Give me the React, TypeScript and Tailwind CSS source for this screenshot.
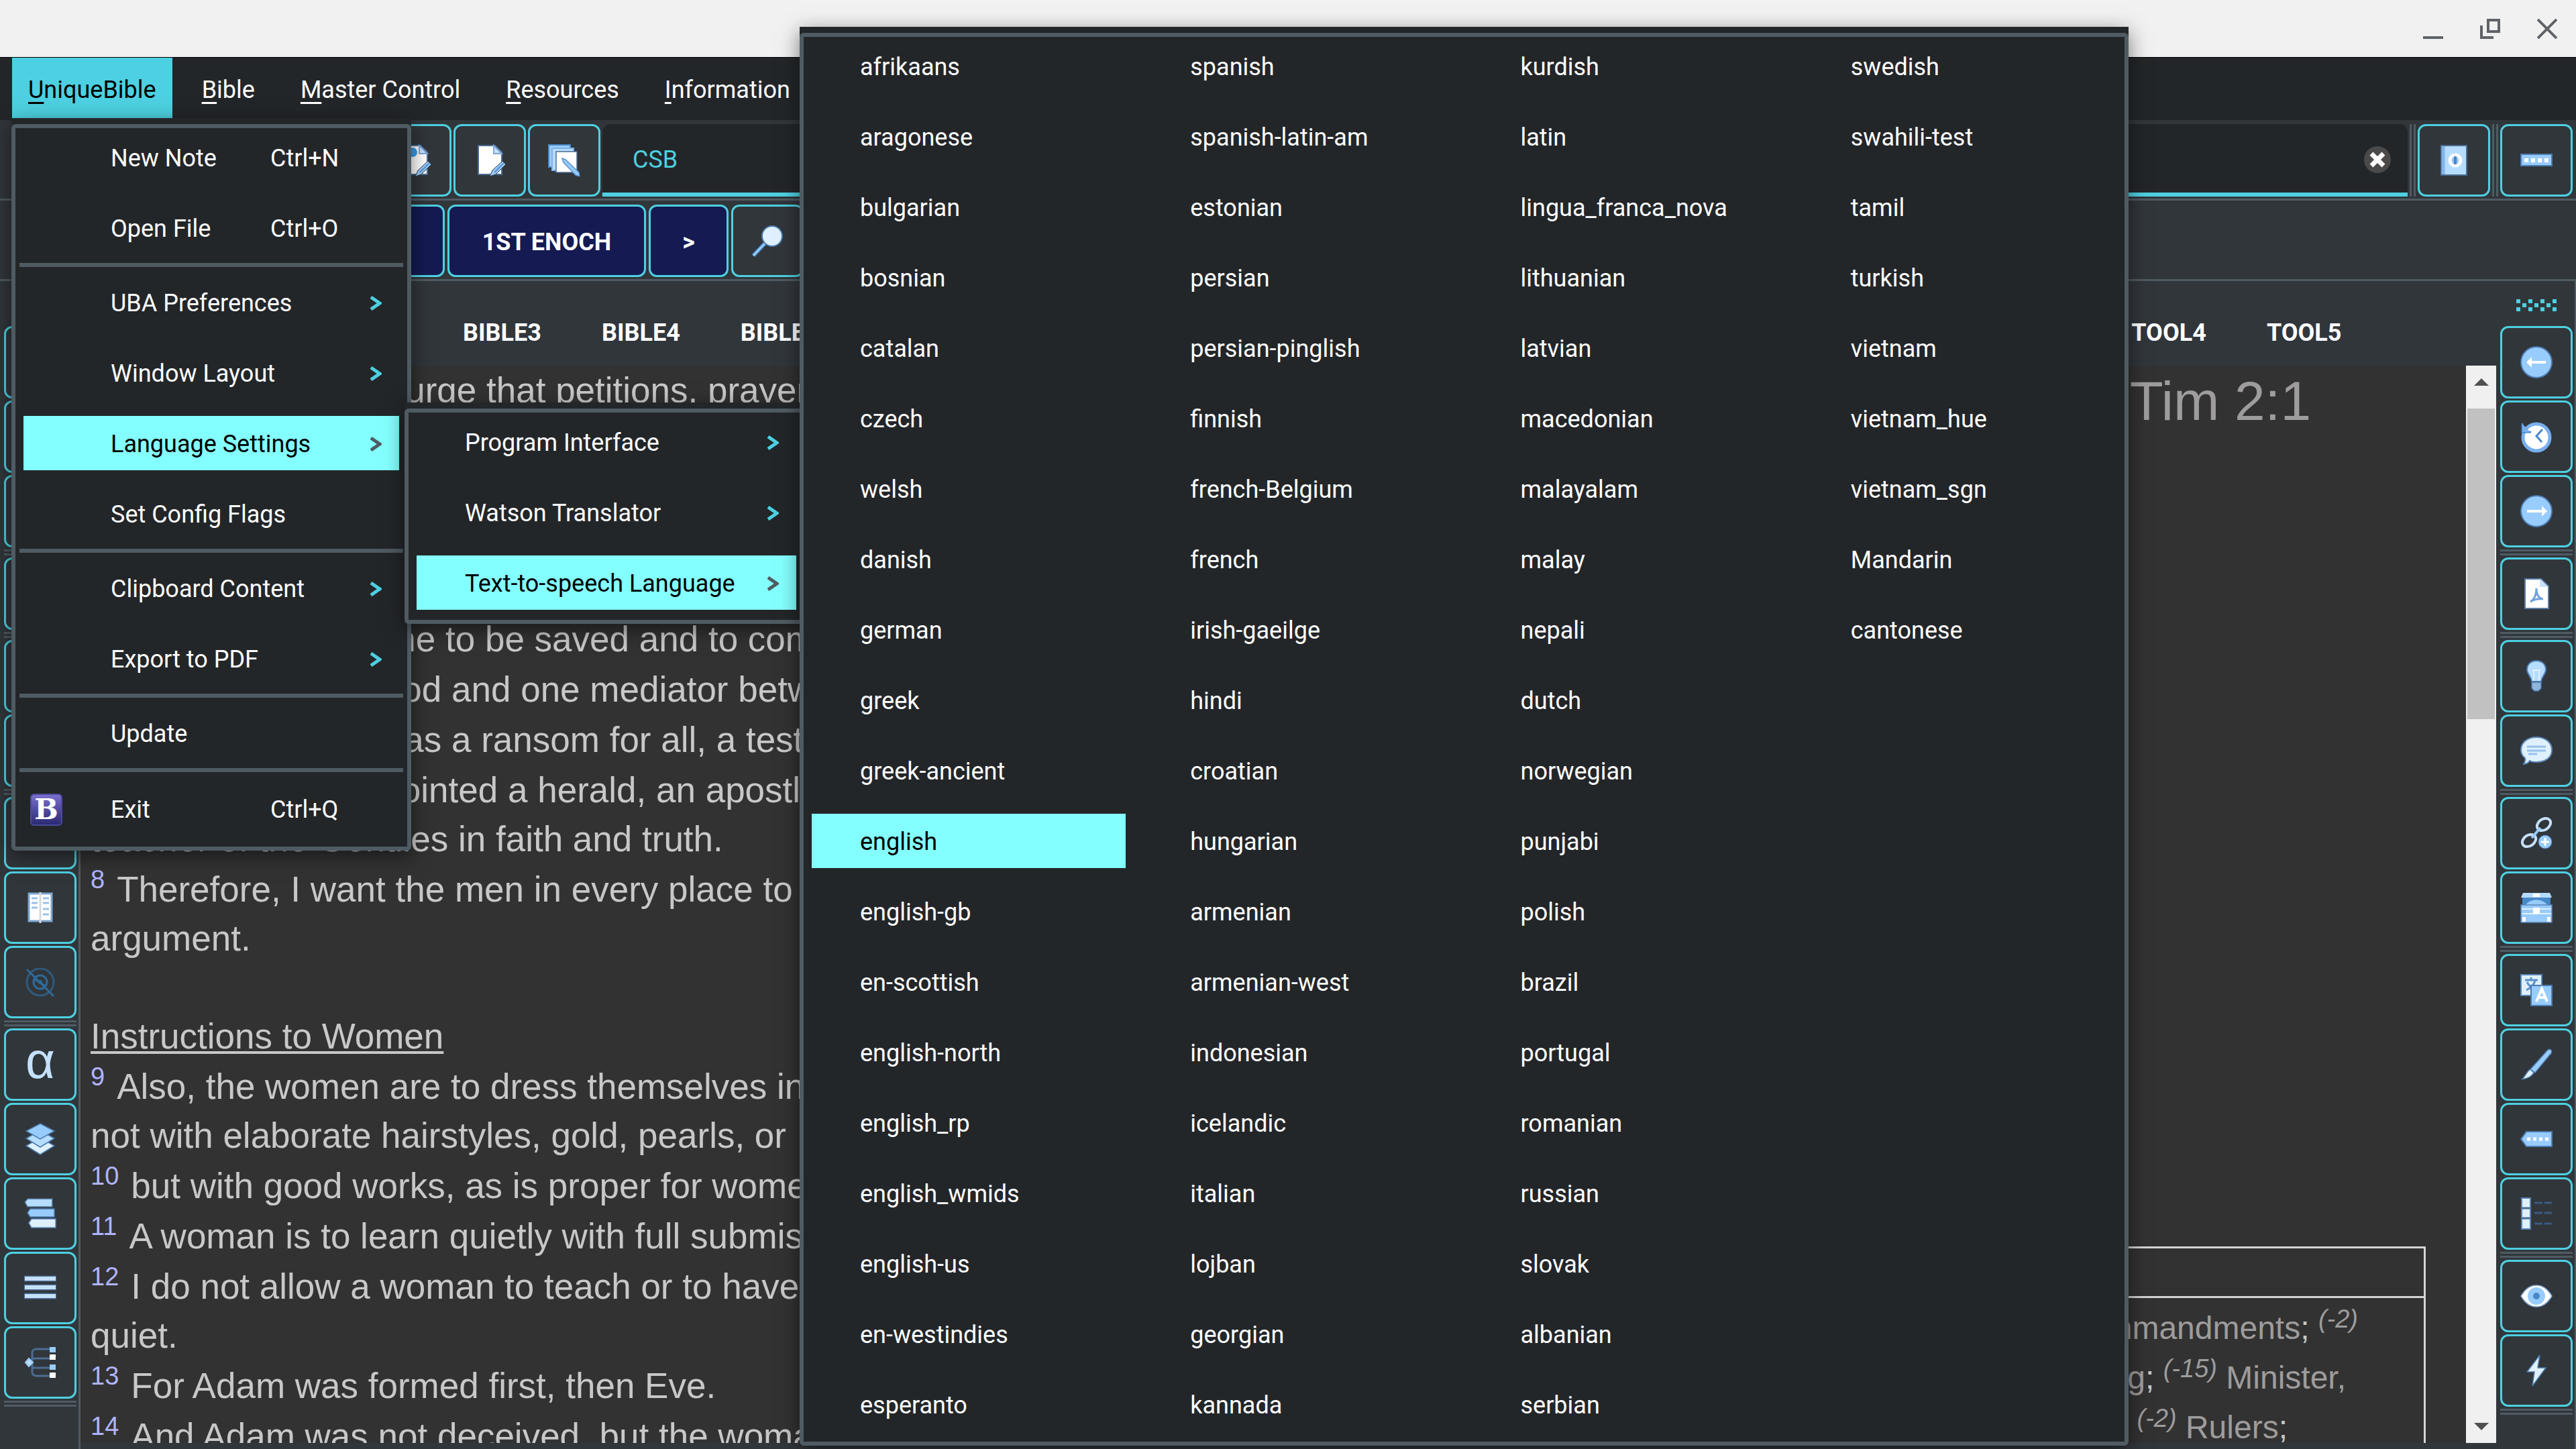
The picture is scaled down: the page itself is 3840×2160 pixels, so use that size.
import type { ReactNode } from "react";

/* ---------- icons (48 unit grid) ---------- */

function Svg({ children }: { children: ReactNode }) {
  return (
    <svg viewBox="0 0 48 48" className="block size-12" fill="none" aria-hidden="true">
      {children}
    </svg>
  );
}

const PencilPage = ({ accent = false }: { accent?: boolean }) => (
  <Svg>
    <path d="M7 2h25l10 10v33H7z" fill="#fff" stroke="#4b6c92" strokeWidth="2" />
    <path d="M30 2v12h12z" fill="#c9e2fa" stroke="#7ba6d6" strokeWidth="2" />
    {accent && <circle cx="20" cy="12" r="7" fill="#3a9be8" />}
    <path d="M24 48l4-9 15-14 5 5-15 15z" fill="#98ccfd" stroke="#31363b" strokeWidth="1" />
    <path d="M31 42l14-14" stroke="#5a91cf" strokeWidth="2" />
  </Svg>
);
const PageStack = () => (
  <Svg>
    <path d="M1 1h32v33H1z" fill="#98ccfd" stroke="#4788c7" strokeWidth="2" />
    <path d="M6 6h32v33H6z" fill="#b6dcfe" stroke="#7fb2e8" strokeWidth="2" />
    <path d="M12 11h31v31H12z" fill="#fff" stroke="#4b6c92" strokeWidth="1.5" />
    <path d="M21 21l5 2 20 19 1 6-6-2-18-19z" fill="#98ccfd" stroke="#5a91cf" strokeWidth="1.5" />
  </Svg>
);
const Search = () => (
  <Svg>
    <path d="M3 46L21 27" stroke="#4788c7" strokeWidth="6" />
    <path d="M3 46L21 27" stroke="#98ccfd" strokeWidth="3" />
    <circle cx="31" cy="17" r="15" fill="#dff0fe" stroke="#4b7cb0" strokeWidth="2" />
  </Svg>
);
const Book = () => (
  <Svg>
    <path d="M5 2h38v44H5z" fill="#b6dcfe" stroke="#4b6c92" strokeWidth="2" />
    <path d="M8 3v42" stroke="#85b5e8" strokeWidth="5" />
    <circle cx="26" cy="24" r="8" fill="#98c6f3" stroke="#fff" strokeWidth="5" />
    <path d="M26 18v12" stroke="#4788c7" strokeWidth="4" />
  </Svg>
);
const Ruler = () => (
  <Svg>
    <path d="M1 15h46v17H1z" fill="#98ccfd" stroke="#4b7cb0" strokeWidth="2" />
    <path d="M6 24h37" stroke="#fff" strokeWidth="6" strokeDasharray="6 4" />
  </Svg>
);
const Arrow = ({ right = false }: { right?: boolean }) => (
  <Svg>
    <circle cx="24" cy="24" r="23" fill="#98ccfd" stroke="#4b7cb0" strokeWidth="2" />
    {right ? (
      <path d="M10 22h22v-6l8 8-8 8v-6H10z" fill="#fff" />
    ) : (
      <path d="M38 22H17v-6l-8 8 8 8v-6h21z" fill="#fff" />
    )}
  </Svg>
);
const History = () => (
  <Svg>
    <circle cx="24" cy="25" r="20" fill="#fff" stroke="#78b0ee" strokeWidth="5" />
    <path d="M3 4v13h13" stroke="#4788c7" strokeWidth="3" />
    <path d="M3 17V5l12 12z" fill="#78b0ee" />
    <path d="M33 13l-9 10 8 9" stroke="#4788c7" strokeWidth="3" />
  </Svg>
);
const Pdf = () => (
  <Svg>
    <path d="M7 2h24l11 11v33H7z" fill="#fff" stroke="#5b7da3" strokeWidth="2" />
    <path d="M29 2v12h13z" fill="#c9e2fa" />
    <path d="M15 36c5-3 9-9 9-20 0 10 4 15 10 16-7-1-13 0-19 4z" stroke="#6fa3da" strokeWidth="3" />
  </Svg>
);
const Bulb = () => (
  <Svg>
    <path d="M24 1c9 0 14 6 14 13s-6 10-7 18H17c-1-8-7-11-7-18S15 1 24 1z" fill="#b6dcfe" stroke="#4b7cb0" strokeWidth="2" />
    <path d="M18 15h12M20 15v16M28 15v16" stroke="#dff0fe" strokeWidth="2" />
    <path d="M17 33h14v9l-4 4h-6l-4-4z" fill="#8fb5de" stroke="#4b7cb0" strokeWidth="1.5" />
  </Svg>
);
const Chat = () => (
  <Svg>
    <path d="M24 4c14 0 23 8 23 19S38 41 24 41c-4 0-7 0-10-2-2 3-5 5-9 5 2-3 3-6 2-9-4-3-6-7-6-12C1 12 10 4 24 4z" fill="#dff0fe" stroke="#5b87b8" strokeWidth="2" />
    <path d="M10 18h28M10 24h28M12 29h13" stroke="#98c2ea" strokeWidth="3" />
  </Svg>
);
const Link = () => (
  <Svg>
    <ellipse cx="35" cy="11" rx="11" ry="8" transform="rotate(-35 35 11)" stroke="#c5e0fa" strokeWidth="4" />
    <ellipse cx="13" cy="35" rx="11" ry="8" transform="rotate(-35 13 35)" stroke="#c5e0fa" strokeWidth="4" />
    <path d="M17 31l13-15" stroke="#98ccfd" strokeWidth="4" />
    <circle cx="37" cy="37" r="10" fill="#98ccfd" stroke="#4b7cb0" strokeWidth="1" />
    <path d="M37 31v12M31 37h12" stroke="#fff" strokeWidth="3" />
  </Svg>
);
const Chest = () => (
  <Svg>
    <path d="M4 2h40l3 7H1z" fill="#b6dcfe" />
    <path d="M3 9h42v14H3z" fill="#4788c7" />
    <path d="M8 20c6-10 26-10 32 0z" fill="#98ccfd" />
    <path d="M1 20h46v26H1z" fill="#98ccfd" stroke="#5b87b8" strokeWidth="1.5" />
    <path d="M2 26h44M2 33h44" stroke="#dff0fe" strokeWidth="2" />
    <path d="M19 24h10v9H19zM19 3h10v5H19zM3 38h5v7H3zM40 38h5v7h-5z" fill="#fff" />
  </Svg>
);
const Translate = () => (
  <Svg>
    <path d="M1 1h31v31H1z" fill="#dff0fe" stroke="#5b87b8" strokeWidth="2" />
    <path d="M7 9h19M16 5v5M22 10c-2 7-7 11-13 14M10 12c3 6 7 9 13 12" stroke="#5a91cf" strokeWidth="3" />
    <path d="M16 17h31v30H16z" fill="#98ccfd" stroke="#4b7cb0" strokeWidth="2" />
    <path d="M24 41l8-19 8 19M27 35h10" stroke="#fff" strokeWidth="4" />
  </Svg>
);
const Brush = () => (
  <Svg>
    <path d="M41 2c4-2 7 1 5 5L22 36l-7-5z" fill="#98ccfd" stroke="#4b7cb0" strokeWidth="1.5" />
    <path d="M15 31l5 5c-3 6-10 9-18 10 6-4 7-12 13-15z" fill="#dff0fe" stroke="#4b7cb0" strokeWidth="1.5" />
  </Svg>
);
const Tag = () => (
  <Svg>
    <path d="M9 13h38v22H9L1 24z" fill="#98ccfd" stroke="#4b7cb0" strokeWidth="2" />
    <path d="M10 24h34" stroke="#fff" strokeWidth="5" strokeDasharray="5 4" />
  </Svg>
);
const Panel = () => (
  <Svg>
    <path d="M2 1h13v46H2z" fill="#dff0fe" stroke="#5b87b8" strokeWidth="2" />
    <path d="M2 16h13M2 31h13" stroke="#4b6c92" strokeWidth="3" />
    <path d="M21 8h12M36 8h11M21 23h12M36 23h11M21 39h12M36 39h11" stroke="#3d5a80" strokeWidth="3" />
  </Svg>
);
const Eye = () => (
  <Svg>
    <path d="M1 24C8 12 15 8 24 8s16 4 23 16c-7 12-14 16-23 16S8 36 1 24z" fill="#fff" stroke="#7ea6cf" strokeWidth="1.5" />
    <circle cx="24" cy="24" r="13" fill="#98ccfd" />
    <circle cx="24" cy="24" r="5" fill="#4788c7" />
  </Svg>
);
const Bolt = () => (
  <Svg>
    <path d="M29 1L10 26h11l-3 21 20-27H26z" fill="#dff0fe" stroke="#4b7cb0" strokeWidth="1.5" />
  </Svg>
);
const OpenBook = () => (
  <Svg>
    <path d="M7 3h34v41H7z" fill="#fff" stroke="#7ea6cf" strokeWidth="3" />
    <path d="M24 1v46" stroke="#d5d9de" strokeWidth="3" />
    <path d="M11 10h9M11 17h9M11 24h9M28 10h9M28 17h9M28 26h9M28 34h9" stroke="#9cc1e6" strokeWidth="3" />
  </Svg>
);
const HiddenEye = () => (
  <Svg>
    <circle cx="24" cy="24" r="20" stroke="#2f5a7c" strokeWidth="3" />
    <circle cx="24" cy="24" r="10" stroke="#2e6a99" strokeWidth="3" />
    <path d="M4 5l40 40M16 20l16 10" stroke="#2e6a99" strokeWidth="3" />
    <circle cx="24" cy="24" r="3" fill="#2e6a99" />
  </Svg>
);
const Layers = () => (
  <Svg>
    <path d="M24 22L45 34 24 47 3 34z" fill="#dff0fe" stroke="#4b7cb0" strokeWidth="1.5" />
    <path d="M24 11L45 23 24 36 3 23z" fill="#b6dcfe" stroke="#4b7cb0" strokeWidth="1.5" />
    <path d="M24 1L45 12 24 24 3 12z" fill="#98ccfd" stroke="#4b7cb0" strokeWidth="1.5" />
  </Svg>
);
const Bars = () => (
  <Svg>
    <path d="M1 7l4-5h37v12H5z" fill="#b6dcfe" stroke="#4b6c92" strokeWidth="1.5" />
    <path d="M5 23l4-6h36v12H9z" fill="#98ccfd" stroke="#4b7cb0" strokeWidth="1.5" />
    <path d="M7 38l4-6h36v13H11z" fill="#dff0fe" stroke="#5b87b8" strokeWidth="1.5" />
  </Svg>
);
const Lines = () => (
  <Svg>
    <path d="M0 10h48M0 23h48M0 36h48" stroke="#4b6c92" strokeWidth="9" />
    <path d="M1 10h46M1 23h46M1 36h46" stroke="#c5e0fa" strokeWidth="6" />
  </Svg>
);
const Tree = () => (
  <Svg>
    <path d="M12 24V9c0-3 3-5 6-5h20M12 18h26M12 32h26M12 24v15c0 3 3 5 6 5h20M4 24h8" stroke="#4d6d92" strokeWidth="3" />
    <path d="M2 24l5-6 6 6-6 6z" fill="#b6dcfe" stroke="#98ccfd" strokeWidth="2" />
    <path d="M38 1h9v8h-9zM38 27h9v8h-9z" fill="#98ccfd" />
    <path d="M38 12h9v8h-9zM38 39h9v8h-9z" fill="#fff" />
  </Svg>
);
const Alpha = () => (
  <span className="block pb-3 font-['Liberation_Sans',sans-serif] text-[76px] leading-12 text-[#c5e0fa]">α</span>
);

function Chevron({ active }: { active?: boolean }) {
  return (
    <svg viewBox="0 0 18 22" className="ml-auto h-[22px] w-[18px]" fill="none" aria-hidden="true">
      <path d="M2 2l13 9-13 9" stroke={active ? "#4f5b62" : "#4dd0e1"} strokeWidth="5" />
    </svg>
  );
}

/* ---------- shared pieces ---------- */

function IconButton({ label, children }: { label: string; children: ReactNode }) {
  return (
    <button
      type="button"
      aria-label={label}
      className="flex size-[108px] shrink-0 items-center justify-center rounded-xl border-3 border-[#4dd0e1] bg-[#31363b]"
    >
      {children}
    </button>
  );
}

type Tool = [string, ReactNode];

function Sidebar({ groups }: { groups: Tool[][] }) {
  return (
    <div className="flex flex-col items-center pt-[27px] pl-[3px]">
      <svg viewBox="0 0 60 18" className="mb-[22px] h-[18px] w-[60px]" fill="#4dd0e1" aria-hidden="true">
        {[0, 18, 36, 54].map((x) => (
          <path key={x} d={`M${x} 0h6v6h-6zM${x} 12h6v6h-6z`} />
        ))}
        {[9, 27, 45].map((x) => (
          <path key={x} d={`M${x} 6h6v6h-6z`} />
        ))}
      </svg>
      <div className="flex flex-col gap-[3px]">
        {groups.map((group, i) => (
          <div key={i} className="flex flex-col gap-[3px]">
            {group.map(([label, icon]) => (
              <IconButton key={label} label={label}>
                {icon}
              </IconButton>
            ))}
            <div className="h-[9px] border-y-3 border-[#4f5b62]" />
          </div>
        ))}
      </div>
    </div>
  );
}

function ToolbarDivider() {
  return <div className="mx-[3px] w-[9px] shrink-0 border-x-3 border-[#4f5b62]" />;
}

function Popup({ className, children }: { className: string; children: ReactNode }) {
  return (
    <div role="menu" className={`absolute bg-[#232629] pt-[9px] shadow-[0_8px_28px_rgba(0,0,0,0.5)] ${className}`}>
      <div className="rounded-md border-6 border-[#4f5b62] px-3 pt-[3px] pb-[15px]">{children}</div>
    </div>
  );
}

interface Entry {
  label: string;
  shortcut?: string;
  arrow?: boolean;
  active?: boolean;
  icon?: ReactNode;
}

function MenuItem({ entry, wide }: { entry: Entry; wide?: boolean }) {
  return (
    <button
      type="button"
      role="menuitem"
      className={`flex w-full items-center pt-[3px] pr-[26px] text-left whitespace-nowrap ${
        entry.icon ? "h-[84px]" : "h-[81px]"
      } ${entry.active ? "bg-[#84ffff] text-black" : "text-white"}`}
    >
      <span className={wide ? "w-[130px] shrink-0 pl-[10px]" : "w-[72px] shrink-0"}>{entry.icon}</span>
      <span className={wide ? "min-w-[238px]" : ""}>{entry.label}</span>
      {entry.shortcut && <span>{entry.shortcut}</span>}
      {entry.arrow && <Chevron active={entry.active} />}
    </button>
  );
}

/* ---------- data ---------- */

const appIcon = (
  <span className="flex size-12 items-center justify-center rounded-md border-2 border-[#4a4a9a] bg-linear-to-b from-[#7a6fd0] to-[#2b2a72] font-['DejaVu_Serif',serif] text-[42px] leading-none font-bold text-white">
    B
  </span>
);

const mainMenu: Entry[][] = [
  [
    { label: "New Note", shortcut: "Ctrl+N" },
    { label: "Open File", shortcut: "Ctrl+O" },
  ],
  [
    { label: "UBA Preferences", arrow: true },
    { label: "Window Layout", arrow: true },
    { label: "Language Settings", arrow: true, active: true },
    { label: "Set Config Flags" },
  ],
  [
    { label: "Clipboard Content", arrow: true },
    { label: "Export to PDF", arrow: true },
  ],
  [{ label: "Update" }],
  [{ label: "Exit", shortcut: "Ctrl+Q", icon: appIcon }],
];

const subMenu: Entry[] = [
  { label: "Program Interface", arrow: true },
  { label: "Watson Translator", arrow: true },
  { label: "Text-to-speech Language", arrow: true, active: true },
];

const languages = [
  ["afrikaans", "aragonese", "bulgarian", "bosnian", "catalan", "czech", "welsh", "danish", "german", "greek", "greek-ancient", "english", "english-gb", "en-scottish", "english-north", "english_rp", "english_wmids", "english-us", "en-westindies", "esperanto"],
  ["spanish", "spanish-latin-am", "estonian", "persian", "persian-pinglish", "finnish", "french-Belgium", "french", "irish-gaeilge", "hindi", "croatian", "hungarian", "armenian", "armenian-west", "indonesian", "icelandic", "italian", "lojban", "georgian", "kannada"],
  ["kurdish", "latin", "lingua_franca_nova", "lithuanian", "latvian", "macedonian", "malayalam", "malay", "nepali", "dutch", "norwegian", "punjabi", "polish", "brazil", "portugal", "romanian", "russian", "slovak", "albanian", "serbian"],
  ["swedish", "swahili-test", "tamil", "turkish", "vietnam", "vietnam_hue", "vietnam_sgn", "Mandarin", "cantonese"],
];

const leftTools: Tool[][] = [
  [["Previous book", <Arrow />], ["Chapter", <OpenBook />], ["Next book", <Arrow right />]],
  [["Search verses", <Search />]],
  [["Notes", <PencilPage />], ["Discourse", <Chat />]],
  [["Highlights", <Brush />], ["Parallel view", <OpenBook />], ["Hide markers", <HiddenEye />]],
  [["Original text", <Alpha />], ["Layers", <Layers />], ["Interlinear", <Bars />], ["Lines", <Lines />], ["Structure", <Tree />]],
];

const rightTools: Tool[][] = [
  [["Back", <Arrow />], ["History", <History />], ["Forward", <Arrow right />]],
  [["PDF", <Pdf />]],
  [["Ideas", <Bulb />], ["Comments", <Chat />]],
  [["Cross references", <Link />], ["Treasury", <Chest />]],
  [["Translate", <Translate />], ["Highlight", <Brush />], ["Bookmarks", <Tag />], ["Side panel", <Panel />]],
  [["Preview", <Eye />], ["Quick run", <Bolt />]],
];

interface Line {
  verse?: string;
  lead?: [string, string];
  text: string;
}

const lines: Line[] = [
  { verse: "1", lead: ["First of all, then, I urge ", "w-[590px]"], text: "that petitions, prayers," },
  { text: "intercessions, and thanksgivings be made" },
  { verse: "2", text: "for kings and all those who are in" },
  { text: "tranquil and quiet life in all godliness" },
  { verse: "3", text: "This is good, and it pleases God" },
  { verse: "4", lead: ["who wants everyone ", "w-[529px]"], text: "to be saved and to come" },
  { verse: "5", lead: ["For there is one God ", "w-[538px]"], text: "and one mediator between" },
  { verse: "6", lead: ["who gave himself as ", "w-[538px]"], text: "a ransom for all, a testimony" },
  { verse: "7", lead: ["For this I was appointed ", "w-[622px]"], text: "a herald, an apostle" },
  { text: "teacher of the Gentiles in faith and truth." },
  { verse: "8", text: "Therefore, I want the men in every place to pray" },
  { text: "argument." },
];

const womenLines: Line[] = [
  { verse: "9", text: "Also, the women are to dress themselves in" },
  { text: "not with elaborate hairstyles, gold, pearls, or" },
  { verse: "10", text: "but with good works, as is proper for women" },
  { verse: "11", text: "A woman is to learn quietly with full submission." },
  { verse: "12", text: "I do not allow a woman to teach or to have" },
  { text: "quiet." },
  { verse: "13", text: "For Adam was formed first, then Eve." },
  { verse: "14", text: "And Adam was not deceived, but the woman" },
];

function VerseLine({ line }: { line: Line }) {
  return (
    <p
      className={
        line.verse
          ? "flex h-[75px] items-end gap-[18px] pb-0.5 whitespace-pre"
          : "flex h-[73px] items-end pb-0.5 whitespace-pre"
      }
    >
      {line.lead ? (
        <span>
          <span className={`inline-flex justify-end overflow-hidden align-bottom ${line.lead[1]}`}>{line.lead[0]}</span>
          {line.text}
        </span>
      ) : (
        <>
          {line.verse && (
            <sup className="top-0 self-start pt-1 text-[38px] leading-9 text-[#b0b4ff]">{line.verse}</sup>
          )}
          <span>{line.text}</span>
        </>
      )}
    </p>
  );
}

function Tabs({ names }: { names: string[] }) {
  return (
    <div role="tablist" className="flex h-[126px] shrink-0 items-center justify-center pt-7 font-bold text-white">
      {names.map((n) => (
        <button key={n} type="button" role="tab" className="px-[45px]">
          {n}
        </button>
      ))}
    </div>
  );
}

const navy =
  "flex h-[108px] shrink-0 items-center justify-center rounded-xl border-3 border-[#4dd0e1] bg-[#151a52] pt-[3px] font-bold text-white";

const Ref = ({ children }: { children: ReactNode }) => (
  <sup className="-top-[17px] align-baseline text-[38px] leading-none italic">{children}</sup>
);
const Semi = () => <span className="text-[#c8c8c8]">;</span>;

export default function App() {
  return (
    <div className="relative flex h-screen flex-col overflow-hidden bg-[#31363b] font-['Roboto',sans-serif] text-[36px] leading-[42px]">
      <header className="flex h-[85px] shrink-0 items-center justify-end gap-[55px] bg-[#f1f1f1] pr-7">
        <button type="button" aria-label="Minimize">
          <svg viewBox="0 0 30 30" className="block size-[30px]" fill="none" stroke="#5f6368" strokeWidth="4">
            <path d="M0 28h30" />
          </svg>
        </button>
        <button type="button" aria-label="Restore">
          <svg viewBox="0 0 30 30" className="block size-[30px]" fill="none" stroke="#5f6368" strokeWidth="4">
            <path d="M12 2h16v17H12zM2 10v18h18" />
          </svg>
        </button>
        <button type="button" aria-label="Close">
          <svg viewBox="0 0 30 30" className="block size-[30px]" fill="none" stroke="#5f6368" strokeWidth="4">
            <path d="M1 1l28 28M29 1L1 29" />
          </svg>
        </button>
      </header>

      <nav className="flex h-[94px] shrink-0 gap-5 border-t border-black bg-[#232629] pl-[18px] text-white">
        {["UniqueBible", "Bible", "Master Control", "Resources", "Information"].map((m, i) => (
          <button
            key={m}
            type="button"
            className={`h-[90px] px-6 pt-1.5 whitespace-nowrap ${i === 0 ? "bg-[#4dd0e1] text-black" : ""}`}
          >
            <span className="underline decoration-3 underline-offset-6">{m[0]}</span>
            {m.slice(1)}
          </button>
        ))}
      </nav>

      <div className="flex h-[120px] shrink-0 border-b-3 border-[#4f5b62] pt-1.5 pr-[5px] pl-[121px]">
        <div className="flex gap-[3px]">
          <IconButton label="Open"><OpenBook /></IconButton>
          <IconButton label="Find"><Search /></IconButton>
          <IconButton label="Books"><Book /></IconButton>
          <IconButton label="Layers"><Layers /></IconButton>
          <IconButton label="New note"><PencilPage accent /></IconButton>
          <IconButton label="Edit note"><PencilPage /></IconButton>
          <IconButton label="Edit pages"><PageStack /></IconButton>
        </div>
        <div className="ml-[3px] flex h-[108px] flex-1 items-center rounded-t-xl border-b-6 border-[#4dd0e1] bg-[#232629] pt-1 pr-6 pl-[45px]">
          <input aria-label="Command" defaultValue="CSB" className="min-w-0 flex-1 bg-transparent text-[#4dd0e1] outline-none" />
          <button type="button" aria-label="Clear">
            <svg viewBox="0 0 42 42" className="block size-[42px]" aria-hidden="true">
              <circle cx="21" cy="21" r="20" fill="#4a4a4a" />
              <path d="M12 12l18 18M30 12L12 30" stroke="#fff" strokeWidth="7" />
            </svg>
          </button>
        </div>
        <div className="flex h-[108px]">
          <ToolbarDivider />
          <IconButton label="Add book"><Book /></IconButton>
          <ToolbarDivider />
          <IconButton label="Toolbar"><Ruler /></IconButton>
        </div>
      </div>

      <div className="flex h-[120px] shrink-0 gap-1 border-b-3 border-[#4f5b62] pt-1.5 pl-[544px]">
        <button type="button" className={`${navy} w-[119px]`}>&lt;</button>
        <button type="button" className={`${navy} w-[296px]`}>1ST ENOCH</button>
        <button type="button" className={`${navy} w-[119px]`}>&gt;</button>
        <IconButton label="Search"><Search /></IconButton>
      </div>

      <main className="flex min-h-0 flex-1">
        <aside className="w-[120px] shrink-0 border-r-3 border-[#4f5b62]">
          <Sidebar groups={leftTools} />
        </aside>

        <div className="grid min-w-0 flex-1 grid-cols-[1257fr_965fr_1379fr] pb-[9px]">
          <section className="flex min-h-0 min-w-0 flex-col">
            <Tabs names={["BIBLE1", "BIBLE2", "BIBLE3", "BIBLE4", "BIBLE5"]} />
            <div className="min-h-0 flex-1 overflow-hidden bg-[#323232] pl-[15px] font-['Liberation_Sans',sans-serif] text-[53px] leading-[73px] text-[#c8c8c8]">
              {lines.map((l) => (
                <VerseLine key={l.text} line={l} />
              ))}
              <h2 className="pt-[71px] pb-0.5 underline decoration-4 underline-offset-4">Instructions to Women</h2>
              {womenLines.map((l) => (
                <VerseLine key={l.text} line={l} />
              ))}
            </div>
          </section>

          <section className="min-w-0 pt-[126px]">
            <div className="h-full bg-[#323232]" />
          </section>

          <section className="flex min-h-0 min-w-0 flex-col">
            <Tabs names={["TOOL1", "TOOL2", "TOOL3", "TOOL4", "TOOL5"]} />
            <div className="flex min-h-0 flex-1">
              <div className="flex min-w-0 flex-1 flex-col overflow-hidden bg-[#323232] font-['Liberation_Sans',sans-serif] text-[48px] leading-[74px] text-[#9e9c9c]">
                <h1 className="h-[1313px] shrink-0 pt-[7px] pr-[231px] text-right text-[82px] leading-[92px]">1 Tim 2:1</h1>
                <table className="mr-[60px] ml-[60px] border-collapse text-right">
                  <thead>
                    <tr>
                      <th className="h-[74px] border-3 border-[#d4d4d4] p-0" scope="col" aria-label="Topics" />
                    </tr>
                  </thead>
                  <tbody>
                    <tr>
                      <td className="border-3 border-[#d4d4d4] pt-2 whitespace-nowrap">
                        <div className="h-[74px] pr-[98px]">Commandments<Semi /> <Ref>(-2)</Ref></div>
                        <div className="h-[74px] pr-[116px]">King<Semi /> <Ref>(-15)</Ref> Minister,</div>
                        <div className="h-[74px] pr-[203px]"><Ref>(-2)</Ref> Rulers<Semi /></div>
                        <div className="h-[74px]" />
                      </td>
                    </tr>
                  </tbody>
                </table>
              </div>
              <div className="flex w-[45px] shrink-0 flex-col items-center bg-[#f0f0f0] py-[19px]">
                <svg viewBox="0 0 22 11" className="h-[11px] w-[22px] shrink-0" fill="#505050" aria-hidden="true">
                  <path d="M0 11L11 0l11 11z" />
                </svg>
                <div className="mt-[34px] h-[463px] w-[41px] bg-[#c1c1c1]" />
                <svg viewBox="0 0 22 11" className="mt-auto h-[11px] w-[22px] shrink-0" fill="#505050" aria-hidden="true">
                  <path d="M0 0l11 11L22 0z" />
                </svg>
              </div>
            </div>
          </section>
        </div>

        <aside className="w-[119px] shrink-0 border-r-2 border-[#4f5b62]">
          <Sidebar groups={rightTools} />
        </aside>
      </main>

      <Popup className="top-[176px] left-[17px] w-[596px]">
        {mainMenu.map((group, i) => (
          <div key={i}>
            {i > 0 && <div className="-mx-1.5 my-3 h-1.5 bg-[#4f5b62]" />}
            <div className="flex flex-col gap-6">
              {group.map((e) => (
                <MenuItem key={e.label} entry={e} wide />
              ))}
            </div>
          </div>
        ))}
      </Popup>

      <Popup className="top-[600px] left-[603px] w-[602px]">
        <div className="flex flex-col gap-6">
          {subMenu.map((e) => (
            <MenuItem key={e.label} entry={e} />
          ))}
        </div>
      </Popup>

      <Popup className="top-10 left-[1192px] w-[1981px]">
        <div className="grid grid-cols-4 gap-x-6">
          {languages.map((col) => (
            <div key={col[0]} className="flex flex-col gap-6">
              {col.map((l) => (
                <MenuItem key={l} entry={{ label: l, active: l === "english" }} />
              ))}
            </div>
          ))}
        </div>
      </Popup>
    </div>
  );
}
